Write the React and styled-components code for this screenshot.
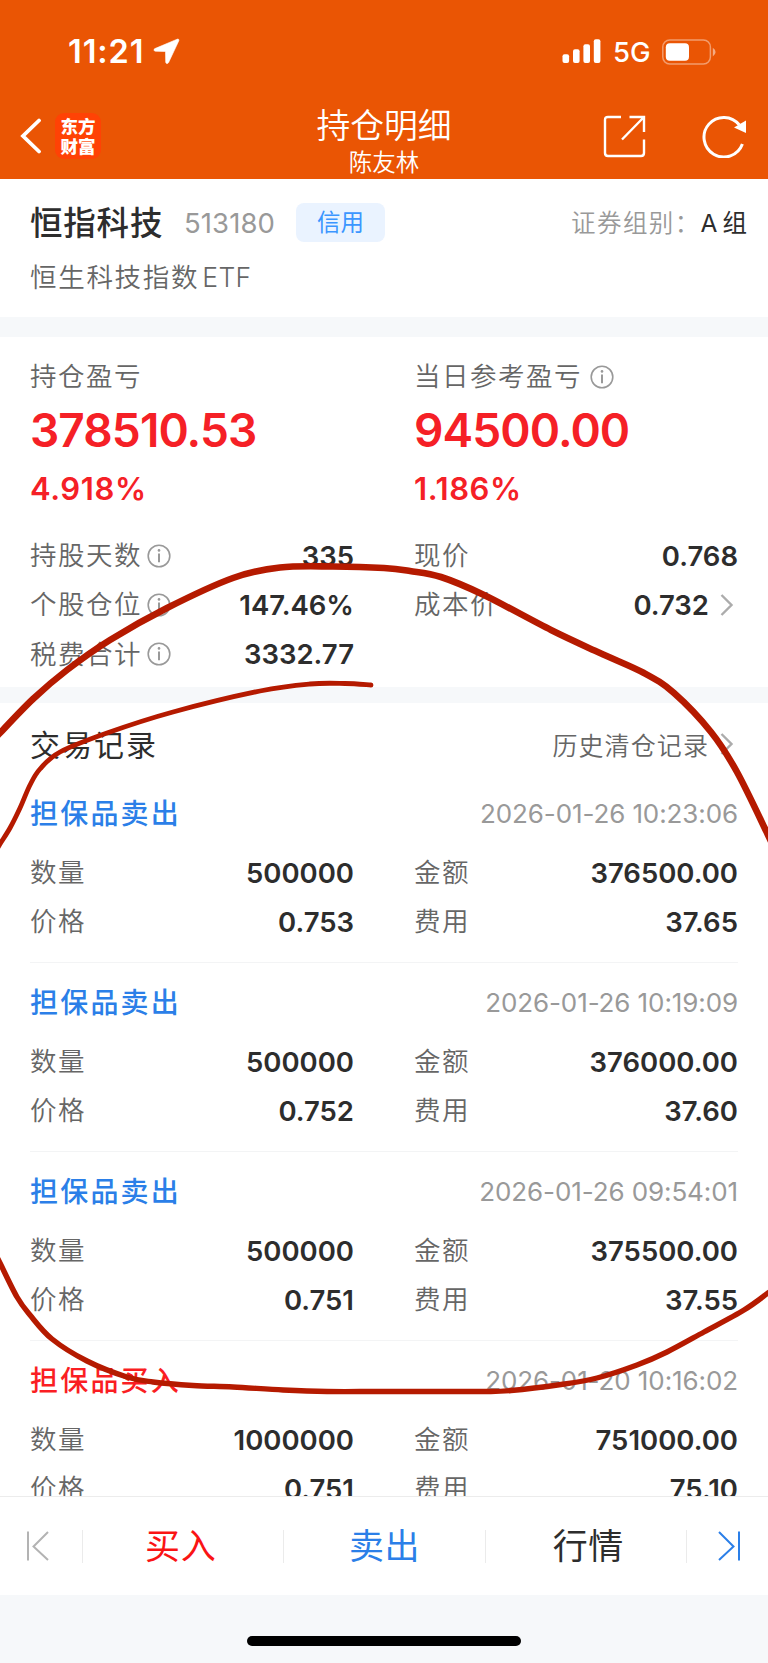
import styled, { createGlobalStyle } from "styled-components";

const summaryRows = [
  [
    { label: "持股天数", value: "335", info: true },
    { label: "现价", value: "0.768" },
  ],
  [
    { label: "个股仓位", value: "147.46%", info: true },
    { label: "成本价", value: "0.732", arrow: true },
  ],
  [{ label: "税费合计", value: "3332.77", info: true }],
];

const records = [
  {
    type: "sell",
    title: "担保品卖出",
    time: "2026-01-26 10:23:06",
    amount: "500000",
    total: "376500.00",
    price: "0.753",
    fee: "37.65",
  },
  {
    type: "sell",
    title: "担保品卖出",
    time: "2026-01-26 10:19:09",
    amount: "500000",
    total: "376000.00",
    price: "0.752",
    fee: "37.60",
  },
  {
    type: "sell",
    title: "担保品卖出",
    time: "2026-01-26 09:54:01",
    amount: "500000",
    total: "375500.00",
    price: "0.751",
    fee: "37.55",
  },
  {
    type: "buy",
    title: "担保品买入",
    time: "2026-01-20 10:16:02",
    amount: "1000000",
    total: "751000.00",
    price: "0.751",
    fee: "75.10",
  },
];

const penStrokes = [
  {
    width: 6.6,
    points: [
      [-6, 740], [0, 733], [33, 699], [67, 670], [110, 640], [167, 608],
      [233, 578], [280, 567.5], [333, 566.5], [384, 568], [410, 571],
      [441, 577], [484, 595], [551, 630], [600, 653], [644, 673],
      [674, 693], [711, 732], [737, 772], [768, 835], [772, 844],
    ],
  },
  {
    width: 4.8,
    points: [
      [371, 685], [345, 683.5], [310, 684], [260, 691], [173, 712],
      [107, 733], [60, 752], [40, 769], [30, 785], [20, 808], [10, 828],
      [0, 844], [-4, 851],
    ],
  },
  {
    width: 5.4,
    points: [
      [-4, 1255], [0, 1263], [17, 1297], [30, 1315], [52, 1339], [87, 1361],
      [127, 1377], [153, 1382], [193, 1385.5], [233, 1387], [283, 1390],
      [327, 1391.5], [384, 1391.5], [480, 1391.5], [511, 1390.5], [561, 1384.5],
      [597, 1378], [637, 1365], [667, 1352], [704, 1332], [744, 1310],
      [768, 1293], [774, 1288],
    ],
  },
];

// smooth curve through all points
function toPath(points) {
  let d = `M${points[0][0]} ${points[0][1]}`;
  for (let i = 0; i < points.length - 1; i++) {
    const p0 = points[i - 1] || points[i];
    const p1 = points[i];
    const p2 = points[i + 1];
    const p3 = points[i + 2] || p2;
    d += `C${p1[0] + (p2[0] - p0[0]) / 6} ${p1[1] + (p2[1] - p0[1]) / 6} ${
      p2[0] - (p3[0] - p1[0]) / 6
    } ${p2[1] - (p3[1] - p1[1]) / 6} ${p2[0]} ${p2[1]}`;
  }
  return d;
}

function InfoIcon() {
  return (
    <svg width="24" height="24" viewBox="0 0 24 24" fill="none" stroke="#999">
      <circle cx="12" cy="12" r="10.8" strokeWidth="1.6" />
      <path d="M12 9.6v8.6" strokeWidth="2" />
      <circle cx="12" cy="6.4" r="1.3" fill="#999" stroke="none" />
    </svg>
  );
}

function ArrowIcon() {
  return (
    <svg width="14" height="24" viewBox="0 0 14 24" fill="none">
      <path d="M1.5 2L11.5 12L1.5 22" stroke="#acacac" strokeWidth="2.4" />
    </svg>
  );
}

function DataItem({ label, value, info, arrow }) {
  return (
    <StyledItem>
      <StyledLabel>{label}</StyledLabel>
      {info && <InfoIcon />}
      <StyledValue>{value}</StyledValue>
      {arrow && (
        <StyledArrow>
          <ArrowIcon />
        </StyledArrow>
      )}
    </StyledItem>
  );
}

function Record({ record }) {
  return (
    <StyledRecord>
      <StyledRecordHead>
        <StyledRecordTitle $type={record.type}>{record.title}</StyledRecordTitle>
        <StyledTime>{record.time}</StyledTime>
      </StyledRecordHead>
      <StyledRow>
        <DataItem label="数量" value={record.amount} />
        <DataItem label="金额" value={record.total} />
      </StyledRow>
      <StyledRow>
        <DataItem label="价格" value={record.price} />
        <DataItem label="费用" value={record.fee} />
      </StyledRow>
    </StyledRecord>
  );
}

function StatusBar() {
  return (
    <StyledStatusBar>
      <StyledClock>11:21</StyledClock>
      <svg width="27" height="27" viewBox="0 0 27 27">
        <path
          d="M24.2 1.2L1.9 10.6C.3 11.4.8 13.1 2.3 13.2L11.8 13.5C12.3 13.5 12.5 13.8 12.5 14.2L12.7 24C12.8 25.8 14.8 26.2 15.6 24.5L25.8 2.8C26.3 1.6 25.4.7 24.2 1.2Z"
          fill="#fff"
          stroke="#fff"
          strokeWidth="0.6"
        />
      </svg>
      <StyledStatusRight>
        <svg width="40" height="25" viewBox="0 0 40 25" fill="#fff">
          <rect x="0.5" y="15.2" width="6.6" height="8.8" rx="2" />
          <rect x="11" y="10.3" width="6.6" height="13.7" rx="2" />
          <rect x="21.4" y="5.2" width="6.6" height="18.8" rx="2" />
          <rect x="31.8" y="0.2" width="6.6" height="23.8" rx="2" />
        </svg>
        <StyledNetwork>5G</StyledNetwork>
        <svg width="54" height="26" viewBox="0 0 54 26">
          <rect
            x="0.8"
            y="1"
            width="47.6"
            height="24"
            rx="7"
            fill="none"
            stroke="#fff"
            strokeOpacity="0.42"
            strokeWidth="1.5"
          />
          <rect x="3.8" y="4.2" width="23.2" height="17.6" rx="4" fill="#fff" />
          <path d="M50.8 8.8q2.8 1.6 2.8 4.3t-2.8 4.3z" fill="#fff" fillOpacity="0.5" />
        </svg>
      </StyledStatusRight>
    </StyledStatusBar>
  );
}

function NavBar() {
  return (
    <StyledNavBar>
      <StyledNavSide>
        <svg width="22" height="36" viewBox="0 0 22 36" fill="none">
          <path d="M19 2.5L3 18L19 33.5" stroke="#fff" strokeWidth="3.8" strokeLinecap="round" />
        </svg>
        <StyledLogo>
          <span>东方</span>
          <span>财富</span>
        </StyledLogo>
      </StyledNavSide>
      <StyledNavTitle>
        <StyledPageTitle>持仓明细</StyledPageTitle>
        <StyledUser>陈友林</StyledUser>
      </StyledNavTitle>
      <StyledNavSide $right>
        <svg width="44" height="44" viewBox="0 0 44 44" fill="none" stroke="#fff" strokeWidth="2.4">
          <path d="M18 3H5Q2 3 2 6V39Q2 42 5 42H38Q41 42 41 39V25.5" />
          <path d="M26.5 3H41V18M41 3L19 25.5" />
        </svg>
        <svg width="46" height="44" viewBox="0 0 46 44" fill="none">
          <path d="M41.4 30A19.8 19.8 0 1 1 38.4 11" stroke="#fff" strokeWidth="3" />
          <path d="M33 13.4L45 6.4V19Z" fill="#fff" />
        </svg>
      </StyledNavSide>
    </StyledNavBar>
  );
}

export default function App() {
  return (
    <>
      <GlobalStyle />
      <StyledPage>
        <StyledTop>
          <StatusBar />
          <NavBar />
        </StyledTop>

        <StyledStock>
          <StyledStockLine>
            <StyledStockName>恒指科技</StyledStockName>
            <StyledCode>513180</StyledCode>
            <StyledBadge>信用</StyledBadge>
            <StyledGroupLabel>证券组别：</StyledGroupLabel>
            <StyledGroup>
              A<span>组</span>
            </StyledGroup>
          </StyledStockLine>
          <StyledFullName>
            恒生科技指数<span>ETF</span>
          </StyledFullName>
        </StyledStock>

        <StyledGap $height={20} />

        <StyledSummary>
          <StyledRow>
            <StyledProfit>
              <StyledLabel>持仓盈亏</StyledLabel>
              <StyledBigNumber>378510.53</StyledBigNumber>
              <StyledPercent>4.918%</StyledPercent>
            </StyledProfit>
            <StyledProfit>
              <StyledLabel>
                当日参考盈亏
                <InfoIcon />
              </StyledLabel>
              <StyledBigNumber>94500.00</StyledBigNumber>
              <StyledPercent>1.186%</StyledPercent>
            </StyledProfit>
          </StyledRow>
          <StyledSummaryRows>
            {summaryRows.map((row, index) => (
              <StyledRow key={index}>
                {row.map((item) => (
                  <DataItem key={item.label} {...item} />
                ))}
              </StyledRow>
            ))}
          </StyledSummaryRows>
        </StyledSummary>

        <StyledGap $height={16} />

        <StyledRecords>
          <StyledRecordsHead>
            <StyledRecordsTitle>交易记录</StyledRecordsTitle>
            <StyledHistory>历史清仓记录</StyledHistory>
            <StyledArrow>
              <ArrowIcon />
            </StyledArrow>
          </StyledRecordsHead>
          {records.map((record) => (
            <Record key={record.time} record={record} />
          ))}
        </StyledRecords>

        <StyledTabBar>
          <StyledStep>
            <svg width="24" height="32" viewBox="0 0 24 32" fill="none" stroke="#b3b3b3" strokeWidth="2">
              <path d="M2 1.5V30.5M22 2L7.5 16.5L22 30" />
            </svg>
          </StyledStep>
          <StyledTab $color="#fa1414" $shift={-5}>
            买入
          </StyledTab>
          <StyledTab $color="#2b7fe8" $shift={0}>
            卖出
          </StyledTab>
          <StyledTab $color="#2d2d2d" $shift={5}>
            行情
          </StyledTab>
          <StyledStep>
            <svg width="24" height="32" viewBox="0 0 24 32" fill="none" stroke="#2b7fe8" strokeWidth="2">
              <path d="M22 1.5V30.5M2 2L16.5 16.5L2 30" />
            </svg>
          </StyledStep>
        </StyledTabBar>

        <StyledHomeArea>
          <StyledHomeIndicator />
        </StyledHomeArea>

        <StyledPen viewBox="0 0 768 1663">
          {penStrokes.map((stroke) => (
            <path key={stroke.width} d={toPath(stroke.points)} strokeWidth={stroke.width} />
          ))}
        </StyledPen>
      </StyledPage>
    </>
  );
}

const GlobalStyle = createGlobalStyle`
  body {
    margin: 0;
    font-family: Inter, "Noto Sans CJK SC", sans-serif;
    color: #2d2d2d;
  }

  *, *::before, *::after {
    box-sizing: border-box;
  }

  svg {
    display: block;
    flex-shrink: 0;
  }
`;

const StyledPage = styled.main`
  position: relative;
  display: flex;
  flex-direction: column;
  width: 768px;
  height: 1663px;
  overflow: hidden;
  background-color: #fff;
`;

const StyledTop = styled.header`
  flex: none;
  height: 179px;
  background-color: #ea5504;
  color: #fff;
`;

const StyledStatusBar = styled.div`
  display: flex;
  align-items: center;
  height: 103px;
  padding: 0 52px 0 68px;
`;

const StyledClock = styled.span`
  width: 85px;
  font-size: 32.5px;
  font-weight: 600;
  letter-spacing: 0.9px;
`;

const StyledStatusRight = styled.div`
  display: flex;
  align-items: center;
  margin-left: auto;
`;

const StyledNetwork = styled.span`
  width: 49px;
  margin-left: 11px;
  font-size: 27.5px;
  font-weight: 500;
`;

const StyledNavBar = styled.div`
  display: grid;
  grid-template-columns: 1fr 200px 1fr;
  height: 76px;
`;

const StyledNavSide = styled.div`
  display: flex;
  align-items: center;
  justify-content: ${({ $right }) => ($right ? "flex-end" : "flex-start")};
  gap: ${({ $right }) => ($right ? "54px" : "13px")};
  height: 66px;
  padding: ${({ $right }) => ($right ? "0 21px 0 0" : "0 0 0 20px")};
`;

const StyledLogo = styled.div`
  display: flex;
  flex-direction: column;
  align-items: center;
  justify-content: center;
  width: 46px;
  height: 46px;
  margin-bottom: 1px;
  border-radius: 9px;
  background-color: #ff4205;
  font-family: "Noto Sans CJK SC", sans-serif;
  font-size: 17.5px;
  font-weight: 900;
  line-height: 20px;
`;

const StyledNavTitle = styled.div`
  display: flex;
  flex-direction: column;
  align-items: center;
  padding-top: 1.5px;
`;

const StyledPageTitle = styled.h1`
  margin: 0;
  font-size: 33.8px;
  font-weight: 350;
  line-height: 42px;
`;

const StyledUser = styled.p`
  margin: 0;
  font-size: 23.5px;
  font-weight: 350;
  line-height: 32px;
`;

const StyledStock = styled.section`
  flex: none;
  height: 138px;
  padding: 19px 21px 0 30px;
`;

const StyledStockLine = styled.div`
  display: flex;
  align-items: center;
  height: 48px;
`;

const StyledStockName = styled.h2`
  width: 154px;
  margin: 0;
  padding-bottom: 3px;
  font-size: 32.5px;
  font-weight: 500;
  letter-spacing: 0.8px;
  white-space: nowrap;
`;

const StyledCode = styled.span`
  width: 112px;
  padding-top: 1px;
  color: #999;
  font-size: 27.5px;
  font-weight: 400;
  letter-spacing: 0.1px;
`;

const StyledBadge = styled.span`
  width: 89px;
  height: 39px;
  border-radius: 8px;
  background-color: #eaf3ff;
  color: #3b96ff;
  font-size: 23.5px;
  line-height: 39px;
  text-align: center;
`;

const StyledGroupLabel = styled.span`
  margin-left: auto;
  padding-bottom: 2px;
  color: #999;
  font-size: 24.5px;
  font-weight: 350;
  letter-spacing: 1.4px;
`;

const StyledGroup = styled.span`
  display: flex;
  align-items: baseline;
  gap: 5px;
  padding-bottom: 2px;
  font-size: 24.5px;
  font-weight: 400;
`;

const StyledFullName = styled.p`
  display: flex;
  align-items: baseline;
  gap: 3px;
  margin: 13px 0 0;
  color: #666;
  font-size: 26.5px;
  font-weight: 350;
  letter-spacing: 1.7px;
  line-height: 36px;

  span {
    letter-spacing: 0.4px;
  }
`;

const StyledGap = styled.div`
  flex: none;
  height: ${({ $height }) => $height}px;
  background-color: #f6f8fa;
`;

const StyledSummary = styled.section`
  flex: none;
  height: 350px;
  padding: 18px 30px 0 30px;
`;

const StyledRow = styled.div`
  display: grid;
  grid-template-columns: 324px 324px;
  column-gap: 60px;
`;

const StyledProfit = styled.div`
  display: flex;
  flex-direction: column;
`;

const StyledLabel = styled.span`
  display: flex;
  align-items: center;
  color: #666;
  font-size: 26.5px;
  font-weight: 350;
  letter-spacing: 1.5px;
  line-height: 43px;

  svg {
    margin-left: 8px;
  }
`;

const StyledBigNumber = styled.strong`
  color: #f52026;
  font-size: 46px;
  font-weight: 600;
  letter-spacing: -0.9px;
  line-height: 65px;
`;

const StyledPercent = styled.strong`
  color: #f52026;
  font-size: 31px;
  font-weight: 600;
  letter-spacing: 0.6px;
  line-height: 52px;
`;

const StyledSummaryRows = styled.div`
  margin-top: 16px;
`;

const StyledItem = styled.div`
  display: flex;
  align-items: center;
  height: 49.3px;

  ${StyledLabel} + svg {
    margin-left: 5px;
  }
`;

const StyledValue = styled.span`
  margin-left: auto;
  font-size: 27.5px;
  font-weight: 600;
  line-height: 34px;
`;

const StyledArrow = styled.span`
  margin: 0 4px 0 11px;
`;

const StyledRecords = styled.section`
  flex: none;
  height: 793px;
  padding: 14px 30px 0 30px;
  overflow: hidden;
`;

const StyledRecordsHead = styled.div`
  display: flex;
  align-items: center;
  height: 57px;
  padding-bottom: 3px;
`;

const StyledRecordsTitle = styled.h3`
  margin: 0 auto 0 0;
  padding-bottom: 2px;
  font-size: 30px;
  font-weight: 400;
  letter-spacing: 2px;
`;

const StyledHistory = styled.span`
  color: #666;
  font-size: 25px;
  font-weight: 350;
  letter-spacing: 1.1px;
`;

const StyledRecord = styled.article`
  height: 189px;
  border-bottom: 1px solid #f3f4f5;
`;

const StyledRecordHead = styled.div`
  display: flex;
  align-items: center;
  justify-content: space-between;
  height: 74px;
  padding-top: 5px;
`;

const StyledRecordTitle = styled.h4`
  margin: 0;
  padding-bottom: 4px;
  color: ${({ $type }) => ($type === "buy" ? "#fa1e23" : "#2b7fe8")};
  font-size: 28px;
  font-weight: 500;
  letter-spacing: 2.2px;
`;

const StyledTime = styled.time`
  color: #999;
  font-size: 26px;
  font-weight: 400;
  letter-spacing: -0.1px;
`;

const StyledTabBar = styled.nav`
  display: flex;
  flex: none;
  align-items: center;
  height: 99px;
  border-top: 1px solid #ececec;
  background-color: #fff;
`;

const StyledStep = styled.div`
  display: flex;
  align-items: center;
  justify-content: center;
  width: 82px;
  height: 33px;
  padding-right: 6px;

  &:last-child {
    padding: 0 0 0 4px;
    border-left: 1px solid #ebebeb;
  }
`;

const StyledTab = styled.div`
  flex: 1;
  height: 33px;
  border-left: 1px solid #ebebeb;
  color: ${({ $color }) => $color};
  font-size: 35px;
  font-weight: 400;
  letter-spacing: 0.6px;
  line-height: 32px;
  text-align: center;
  text-indent: ${({ $shift }) => $shift}px;
`;

const StyledHomeArea = styled.footer`
  display: flex;
  flex: 1;
  align-items: flex-end;
  justify-content: center;
  padding-bottom: 17px;
  background-color: #f6f8fa;
`;

const StyledHomeIndicator = styled.div`
  width: 274px;
  height: 10px;
  border-radius: 5px;
  background-color: #000;
`;

const StyledPen = styled.svg`
  position: absolute;
  inset: 0;
  width: 768px;
  height: 1663px;
  fill: none;
  stroke: #b51a00;
  stroke-linecap: round;
  stroke-linejoin: round;
  pointer-events: none;
`;
